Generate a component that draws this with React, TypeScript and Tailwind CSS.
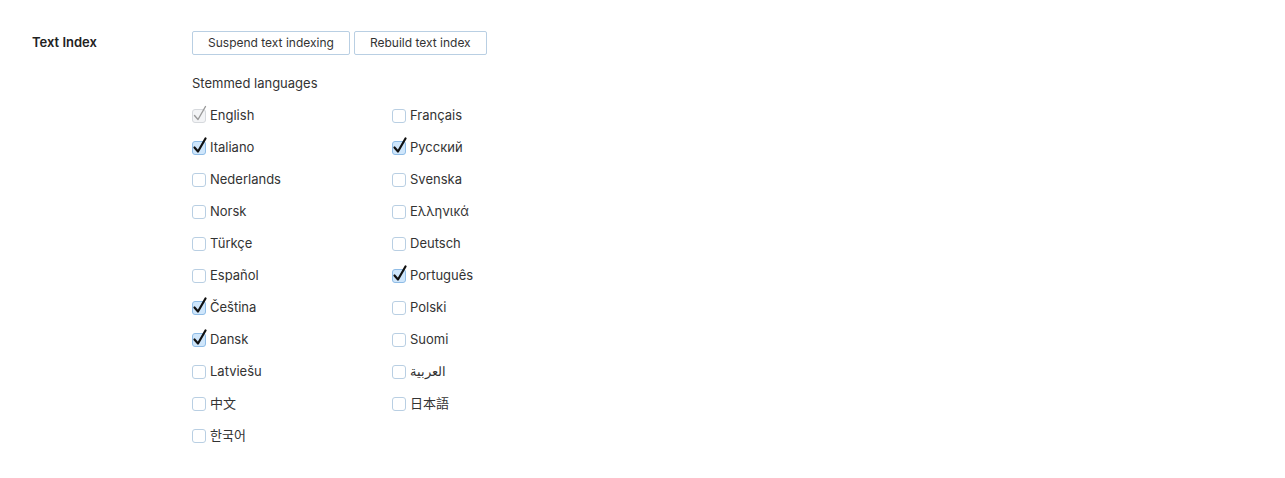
import React from "react";

type Lang = { label: string; checked?: boolean; disabled?: boolean };

const left: Lang[] = [
  { label: "English", checked: true, disabled: true },
  { label: "Italiano", checked: true },
  { label: "Nederlands" },
  { label: "Norsk" },
  { label: "Türkçe" },
  { label: "Español" },
  { label: "Čeština", checked: true },
  { label: "Dansk", checked: true },
  { label: "Latviešu" },
  { label: "中文" },
  { label: "한국어" },
];

const right: Lang[] = [
  { label: "Français" },
  { label: "Русский", checked: true },
  { label: "Svenska" },
  { label: "Ελληνικά" },
  { label: "Deutsch" },
  { label: "Português", checked: true },
  { label: "Polski" },
  { label: "Suomi" },
  { label: "العربية" },
  { label: "日本語" },
];

function Check({ checked, disabled }: { checked?: boolean; disabled?: boolean }) {
  return (
    <span className="relative inline-block w-[14px] h-[14px] shrink-0">
      <span
        className={
          "absolute inset-0 rounded-[3px] border " +
          (disabled
            ? "border-[#d6d9dd] bg-[#f3f4f6]"
            : checked
              ? "border-[#8fbce6] bg-[#cfe6fb]"
              : "border-[#b9cfe3] bg-white")
        }
      />
      {checked ? (
        <svg
          className="absolute left-[1px] top-[-4px]"
          width="14"
          height="17"
          viewBox="0 0 14 17"
          fill="none"
        >
          <path
            d="M1.5 10.5 L5 14.5 L12.5 1.5"
            stroke={disabled ? "#9a9a9a" : "#111"}
            strokeWidth={disabled ? 1.4 : 2.2}
            strokeLinecap="round"
            strokeLinejoin="round"
          />
        </svg>
      ) : null}
    </span>
  );
}

function Row({ lang }: { lang: Lang }) {
  return (
    <label className="flex items-center h-[32px] gap-[4px] text-[13px] text-[#333]">
      <Check checked={lang.checked} disabled={lang.disabled} />
      <span>{lang.label}</span>
    </label>
  );
}

export default function App() {
  return (
    <div
      className="min-h-[478px] bg-white pt-[31px] pl-[32px]"
      style={{ fontFamily: 'Inter, "Noto Sans", "Noto Sans CJK SC", "Noto Sans CJK KR", sans-serif' }}
    >
      <div className="flex">
        <div className="w-[160px] pt-[2px] text-[13px] font-semibold text-[#222]">Text Index</div>
        <div className="flex flex-col">
          <div className="flex gap-[4px]">
            <button className="h-[24px] px-[15px] rounded-[2px] border border-[#b9cfe3] bg-white text-[12px] text-[#333]">
              Suspend text indexing
            </button>
            <button className="h-[24px] px-[15px] rounded-[2px] border border-[#b9cfe3] bg-white text-[12px] text-[#333]">
              Rebuild text index
            </button>
          </div>
          <div className="mt-[19px] text-[13px] text-[#333]">Stemmed languages</div>
          <div className="mt-[6px] flex">
            <div className="w-[200px] flex flex-col">
              {left.map((l) => (
                <Row key={l.label} lang={l} />
              ))}
            </div>
            <div className="flex flex-col">
              {right.map((l) => (
                <Row key={l.label} lang={l} />
              ))}
            </div>
          </div>
        </div>
      </div>
    </div>
  );
}
